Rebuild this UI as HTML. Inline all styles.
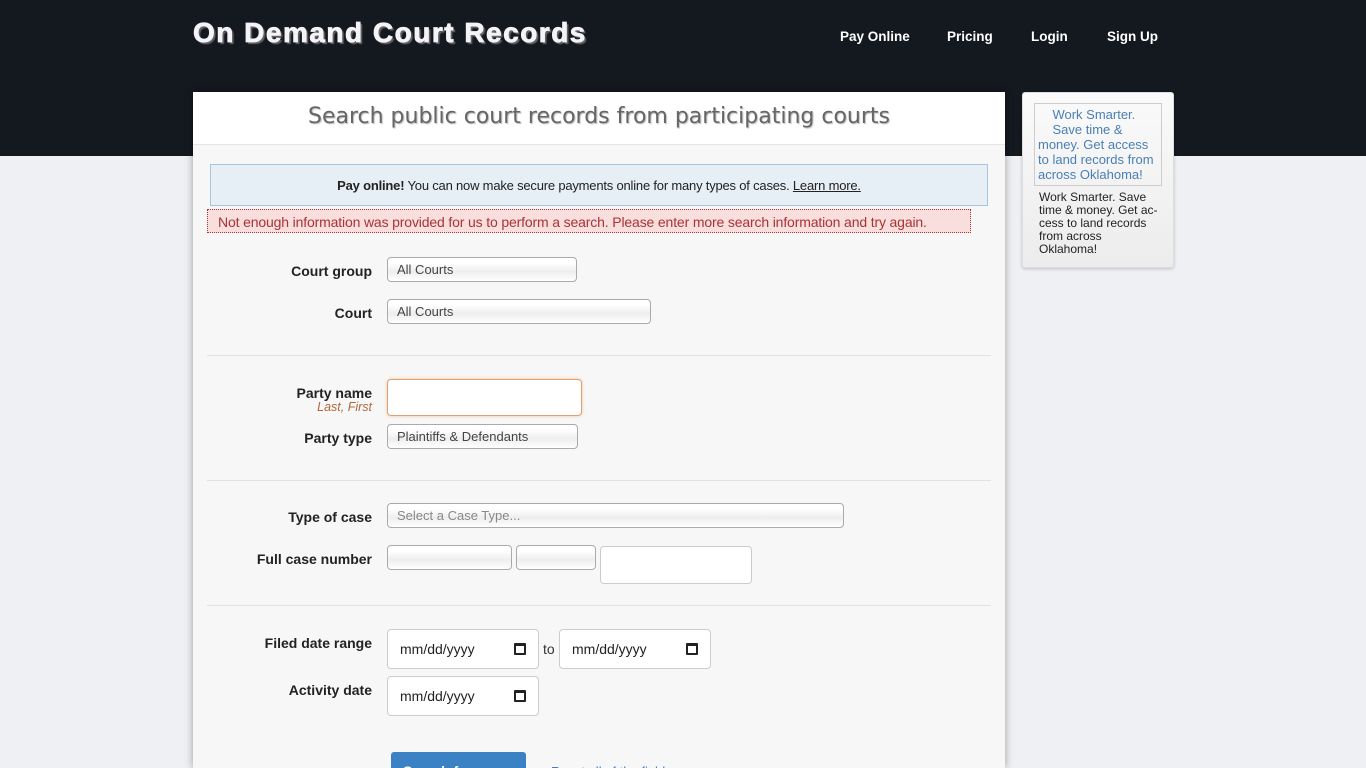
<!DOCTYPE html>
<html><head><meta charset="utf-8"><style>
*{box-sizing:border-box;margin:0;padding:0}
html,body{width:1366px;height:768px;overflow:hidden}
body{background:#eef0f3;font-family:"Liberation Sans",Arial,sans-serif;position:relative}
.hdr{position:absolute;left:0;top:0;width:1366px;height:156px;background:#14181f}
.logo{position:absolute;left:193px;top:17px;font-size:28px;font-weight:bold;color:#f4f4f8;text-shadow:2px 2px 1px #666;letter-spacing:1.5px;-webkit-text-stroke:0.8px #f4f4f8}
.nav{position:absolute;top:29px;color:#fff;font-size:13.5px;font-weight:bold}
.panel{position:absolute;left:193px;top:92px;width:812px;height:676px;overflow:hidden;background:#f7f7f7;box-shadow:0 0 8px rgba(0,0,0,.35)}
.ttl{height:53px;background:#fff;border-bottom:1px solid #e6e6e6;text-align:center;font-family:"DejaVu Sans",sans-serif;font-size:22px;color:#666;padding-top:12px;text-shadow:1px 1px 1px #bbb}
.ab{position:absolute}
.info{left:17px;top:72px;width:778px;height:42px;background:#e6eef6;border:1px solid #a9c3dc;text-align:center;font-size:13px;color:#222;padding-top:13px;letter-spacing:-0.2px}
.err{left:14px;top:117px;width:764px;height:24px;background:#f9dede;border:1px dotted #a33;color:#a33;font-size:14px;padding-top:4px;padding-left:10px;letter-spacing:-0.15px}
.lbl{position:absolute;right:633px;font-size:14px;font-weight:bold;color:#222;text-align:right}
.sel{position:absolute;height:25px;border:1px solid #aaa;border-radius:4px;background:linear-gradient(#fff 20%,#eee 60%,#fff);font-size:13px;color:#444;padding:4px 9px}
.inp{position:absolute;background:#fff;border:1px solid #ccc;border-radius:4px}
.date{position:absolute;width:152px;height:40px;background:#fff;border:1px solid #ccc;border-radius:4px;font-size:14px;color:#222;padding:11px 12px}
.date span{position:absolute;right:12px;top:13px;width:12px;height:12px;border:2px solid #222;border-top-width:3px;border-radius:1px}
.hr{position:absolute;left:14px;width:784px;height:1px;background:#e2e2e2}
.side{position:absolute;left:1022px;top:92px;width:152px;height:176px;background:linear-gradient(#fafafa,#ececec);border:1px solid #ddd;border-radius:3px;box-shadow:0 1px 3px rgba(0,0,0,.2)}
</style></head><body>
<div class="hdr"></div>
<div class="logo">On Demand Court Records</div>
<div class="nav" style="left:840px">Pay Online</div>
<div class="nav" style="left:947px">Pricing</div>
<div class="nav" style="left:1031px">Login</div>
<div class="nav" style="left:1107px">Sign Up</div>
<div class="panel">
<div class="ttl">Search public court records from participating courts</div>
<div class="ab info"><b>Pay online!</b> You can now make secure payments online for many types of cases. <u>Learn more.</u></div>
<div class="ab err">Not enough information was provided for us to perform a search. Please enter more search information and try again.</div>
<div class="lbl" style="top:171px">Court group</div>
<div class="sel" style="left:194px;top:165px;width:190px">All Courts</div>
<div class="lbl" style="top:213px">Court</div>
<div class="sel" style="left:194px;top:207px;width:264px">All Courts</div>
<div class="hr" style="top:263px"></div>
<div class="lbl" style="top:293px">Party name<br><span style="font-weight:normal;font-style:italic;color:#b0683a;font-size:12.5px;position:relative;top:-3px">Last, First</span></div>
<div class="inp" style="left:194px;top:287px;width:195px;height:37px;border:1px solid #e0a070;box-shadow:0 0 3px #f0c8a0"></div>
<div class="lbl" style="top:338px">Party type</div>
<div class="sel" style="left:194px;top:332px;width:191px">Plaintiffs &amp; Defendants</div>
<div class="hr" style="top:388px"></div>
<div class="lbl" style="top:417px">Type of case</div>
<div class="sel" style="left:194px;top:411px;width:457px;color:#888">Select a Case Type...</div>
<div class="lbl" style="top:459px">Full case number</div>
<div class="sel" style="left:194px;top:453px;width:125px"></div>
<div class="sel" style="left:323px;top:453px;width:80px"></div>
<div class="inp" style="left:407px;top:454px;width:152px;height:38px"></div>
<div class="hr" style="top:513px"></div>
<div class="lbl" style="top:543px">Filed date range</div>
<div class="date" style="left:194px;top:537px">mm/dd/yyyy<span></span></div>
<div class="ab" style="left:350px;top:549px;font-size:14px;color:#333">to</div>
<div class="date" style="left:366px;top:537px">mm/dd/yyyy<span></span></div>
<div class="lbl" style="top:590px">Activity date</div>
<div class="date" style="left:194px;top:584px">mm/dd/yyyy<span></span></div>
<div class="ab" style="left:198px;top:660px;width:135px;height:40px;background:#3b82c4;border-radius:3px;color:#fff;font-weight:bold;font-size:14px;padding:11px 12px">Search for cases</div>
<div class="ab" style="left:358px;top:672px;font-size:13px;color:#3b7dbf">Reset all of the fields</div>
</div>
<div class="side">
<div style="position:absolute;left:11px;top:10px;width:128px;height:83px;border:1px solid #ccc;font-size:13px;color:#4a7fb5;line-height:15px;padding:3px 3px;white-space:nowrap;overflow:hidden">&nbsp;&nbsp;&nbsp;&nbsp;Work Smarter.<br>&nbsp;&nbsp;&nbsp;&nbsp;Save time &amp;<br>money. Get access<br>to land records from<br>across Oklahoma!</div>
<div style="position:absolute;left:16px;top:98px;width:125px;font-size:12px;color:#222;line-height:13px;white-space:nowrap">Work Smarter. Save<br>time &amp; money. Get ac-<br>cess to land records<br>from across<br>Oklahoma!</div>
</div>
</body></html>
